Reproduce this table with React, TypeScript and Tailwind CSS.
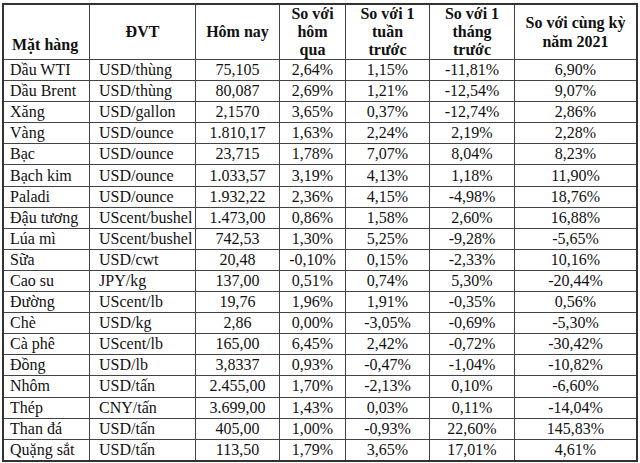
const rows: string[][] = [
  ["Dầu WTI", "USD/thùng", "75,105", "2,64%", "1,15%", "-11,81%", "6,90%"],
  ["Dầu Brent", "USD/thùng", "80,087", "2,69%", "1,21%", "-12,54%", "9,07%"],
  ["Xăng", "USD/gallon", "2,1570", "3,65%", "0,37%", "-12,74%", "2,86%"],
  ["Vàng", "USD/ounce", "1.810,17", "1,63%", "2,24%", "2,19%", "2,28%"],
  ["Bạc", "USD/ounce", "23,715", "1,78%", "7,07%", "8,04%", "8,23%"],
  ["Bạch kim", "USD/ounce", "1.033,57", "3,19%", "4,13%", "1,18%", "11,90%"],
  ["Paladi", "USD/ounce", "1.932,22", "2,36%", "4,15%", "-4,98%", "18,76%"],
  ["Đậu tương", "UScent/bushel", "1.473,00", "0,86%", "1,58%", "2,60%", "16,88%"],
  ["Lúa mì", "UScent/bushel", "742,53", "1,30%", "5,25%", "-9,28%", "-5,65%"],
  ["Sữa", "USD/cwt", "20,48", "-0,10%", "0,15%", "-2,33%", "10,16%"],
  ["Cao su", "JPY/kg", "137,00", "0,51%", "0,74%", "5,30%", "-20,44%"],
  ["Đường", "UScent/lb", "19,76", "1,96%", "1,91%", "-0,35%", "0,56%"],
  ["Chè", "USD/kg", "2,86", "0,00%", "-3,05%", "-0,69%", "-5,30%"],
  ["Cà phê", "UScent/lb", "165,00", "6,45%", "2,42%", "-0,72%", "-30,42%"],
  ["Đồng", "USD/lb", "3,8337", "0,93%", "-0,47%", "-1,04%", "-10,82%"],
  ["Nhôm", "USD/tấn", "2.455,00", "1,70%", "-2,13%", "0,10%", "-6,60%"],
  ["Thép", "CNY/tấn", "3.699,00", "1,43%", "0,03%", "0,11%", "-14,04%"],
  ["Than đá", "USD/tấn", "405,00", "1,00%", "-0,93%", "22,60%", "145,83%"],
  ["Quặng sắt", "USD/tấn", "113,50", "1,79%", "3,65%", "17,01%", "4,61%"],
];

const cols = "grid grid-cols-[85px_106px_84px_66px_84px_85px_1fr]";

function Head({ lines }: { lines: string[] }) {
  return (
    <div className="border-l border-[#444] flex flex-col items-center justify-center text-center">
      {lines.map((l) => (
        <span key={l}>{l}</span>
      ))}
    </div>
  );
}

export default function App() {
  return (
    <div className="w-[640px] h-[463px] bg-white pt-[3px] pl-[2px] text-[#111] font-['Liberation_Serif','Times_New_Roman',serif] text-[16px]">
      <div className="w-[636px] border-2 border-[#333]">
        <div className={`${cols} h-[54px] font-bold leading-[18px]`}>
          <div className="flex items-end pb-[5px] pl-[8px] whitespace-nowrap">Mặt hàng</div>
          <Head lines={["ĐVT"]} />
          <Head lines={["Hôm nay"]} />
          <Head lines={["So với", "hôm", "qua"]} />
          <Head lines={["So với 1", "tuần", "trước"]} />
          <Head lines={["So với 1", "tháng", "trước"]} />
          <div className="border-l border-[#444] flex flex-col items-center justify-center text-center leading-[19px]">
            <span>So với cùng kỳ</span>
            <span>năm 2021</span>
          </div>
        </div>
        {rows.map((r) => (
          <div key={r[0]} className={`${cols} h-[21.1px] border-t border-[#444] leading-[18px] whitespace-nowrap`}>
            <div className="flex items-center pl-[6px] overflow-hidden">{r[0]}</div>
            <div className="flex items-center pl-[9px] border-l border-[#444] overflow-hidden">{r[1]}</div>
            {r.slice(2).map((v, i) => (
              <div key={i} className="flex items-center justify-center border-l border-[#444] overflow-hidden">
                {v}
              </div>
            ))}
          </div>
        ))}
      </div>
    </div>
  );
}
